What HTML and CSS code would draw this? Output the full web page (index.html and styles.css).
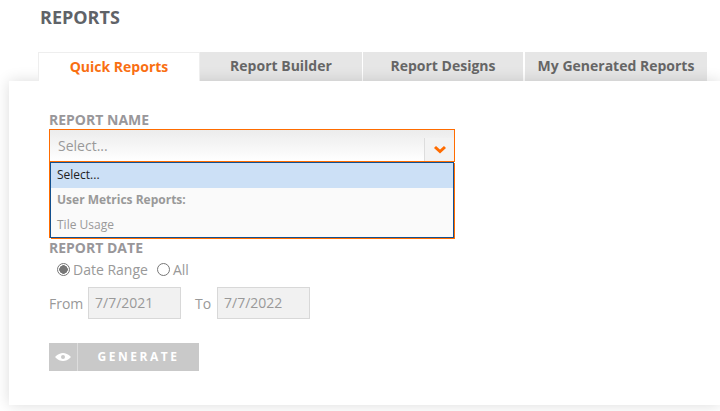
FILE: index.html
```html
<!DOCTYPE html>
<html>
<head>
    <title>Reports</title>
    <link rel="stylesheet" href="styles.css">
</head>
<body>
    <h1 class="page-title">REPORTS</h1>

    <div class="tabs">
        <div class="tab tab-active">Quick Reports</div>
        <div class="tab tab-builder">Report Builder</div>
        <div class="tab tab-designs">Report Designs</div>
        <div class="tab tab-mine">My Generated Reports</div>
    </div>

    <div class="panel">
        <div class="field-label">REPORT NAME</div>
        <div class="select-box">
            <div class="select-value">Select...</div>
            <div class="select-arrow">
                <svg width="14" height="9" viewBox="0 0 14 9">
                    <path d="M2 2 L7 6.5 L12 2" fill="none" stroke="#ff6c00" stroke-width="3"/>
                </svg>
            </div>
        </div>
        <div class="select-list">
            <div class="option option-selected">Select...</div>
            <div class="option option-group">User Metrics Reports:</div>
            <div class="option">Tile Usage</div>
        </div>

        <div class="field-label date-label">REPORT DATE</div>
        <div class="radio-row">
            <span class="radio radio-on"></span>
            <span class="radio-text">Date Range</span>
            <span class="radio"></span>
            <span class="radio-text">All</span>
        </div>
        <div class="date-row">
            <span class="date-text">From</span>
            <div class="date-input">7/7/2021</div>
            <span class="date-text date-to">To</span>
            <div class="date-input">7/7/2022</div>
        </div>

        <div class="generate-btn">
            <div class="generate-icon">
                <svg width="16" height="8" viewBox="0 0 16 8">
                    <path fill="#fff" d="M0 4 C3 1 5.5 0 8 0 C10.5 0 13 1 16 4 C13 7 10.5 8 8 8 C5.5 8 3 7 0 4 Z"/>
                    <circle cx="8" cy="4" r="2" fill="#c9c9c9"/>
                </svg>
            </div>
            <div class="generate-text">GENERATE</div>
        </div>
    </div>
</body>
</html>
```

FILE: styles.css
```css
html, body {
    margin: 0;
    padding: 0;
    height: 411px;
    overflow: hidden;
    background-color: #fff;
    font-family: "Open Sans", sans-serif;
}

.page-title {
    margin: 0;
    padding: 5px 0 0 40px;
    height: 52px;
    box-sizing: border-box;
    font-size: 18px;
    line-height: 24px;
    font-weight: 700;
    color: #5f6368;
}

.tabs {
    display: flex;
    padding-left: 38px;
    height: 29px;
}

.tab {
    height: 29px;
    box-sizing: border-box;
    background-color: #e6e6e6;
    color: #666;
    font-size: 14px;
    font-weight: 700;
    line-height: 28px;
    text-align: center;
}

.tab-active {
    width: 162px;
    background-color: #fff;
    border: 1px solid #eee;
    border-bottom: none;
    color: #f96f12;
    position: relative;
    z-index: 1;
}

.tab-builder {
    width: 162px;
}

.tab-designs {
    width: 160px;
    margin-left: 1px;
}

.tab-mine {
    width: 182px;
    margin-left: 2px;
}

.panel {
    position: relative;
    margin-left: 9px;
    height: 324px;
    box-sizing: border-box;
    padding: 30px 0 0 40px;
    background-color: #fff;
    box-shadow: 0 0 14px rgba(0, 0, 0, 0.14);
}

.field-label {
    font-size: 14px;
    line-height: 18px;
    font-weight: 700;
    color: #99979a;
}

.select-box {
    display: flex;
    width: 406px;
    height: 33px;
    box-sizing: border-box;
    border: 1px solid #ff6c00;
    background: linear-gradient(#ececec, #fff);
}

.select-value {
    flex: 1;
    padding-left: 8px;
    font-size: 14px;
    line-height: 31px;
    color: #999;
}

.select-arrow {
    display: flex;
    align-items: center;
    justify-content: center;
    width: 29px;
    margin: 8px 0 0;
    border-left: 1px solid #ddd;
    background-color: #f3f3f3;
}

.select-list {
    width: 404px;
    height: 76px;
    margin-left: 1px;
    box-sizing: border-box;
    border: 1px solid #12508f;
    box-shadow: 1px 1px 0 #ff6c00, -1px 0 0 #ff6c00;
    background-color: #fafafa;
}

.option {
    height: 25px;
    padding-left: 6px;
    font-size: 12px;
    line-height: 23px;
    color: #999;
}

.option-selected {
    background-color: #cce0f6;
    color: #222;
}

.option-group {
    font-weight: 700;
}

.date-label {
    margin-top: 1px;
}

.radio-row {
    display: flex;
    align-items: center;
    height: 24px;
    padding-left: 8px;
}

.radio {
    width: 13px;
    height: 13px;
    box-sizing: border-box;
    border: 1px solid #777;
    border-radius: 50%;
    background-color: #fff;
}

.radio-on {
    background: radial-gradient(circle, #777 0 4px, #fff 4.5px);
}

.radio-text {
    margin: 0 9px 0 3px;
    font-size: 14px;
    color: #999;
}

.date-row {
    display: flex;
    align-items: center;
    margin-top: 6px;
}

.date-text {
    width: 39px;
    font-size: 14px;
    color: #999;
}

.date-to {
    width: 22px;
    margin-left: 14px;
}

.date-input {
    width: 93px;
    height: 32px;
    box-sizing: border-box;
    padding-left: 6px;
    border: 1px solid #d8d8d8;
    background-color: #f1f1f1;
    font-size: 14px;
    line-height: 30px;
    color: #999;
}

.generate-btn {
    display: flex;
    width: 150px;
    height: 28px;
    margin-top: 24px;
    background-color: #c9c9c9;
    color: #fff;
}

.generate-icon {
    display: flex;
    align-items: center;
    justify-content: center;
    width: 28px;
    border-right: 1px solid #ddd;
}

.generate-text {
    flex: 1;
    text-align: center;
    font-size: 12px;
    line-height: 28px;
    font-weight: 700;
    letter-spacing: 2.5px;
}
```
